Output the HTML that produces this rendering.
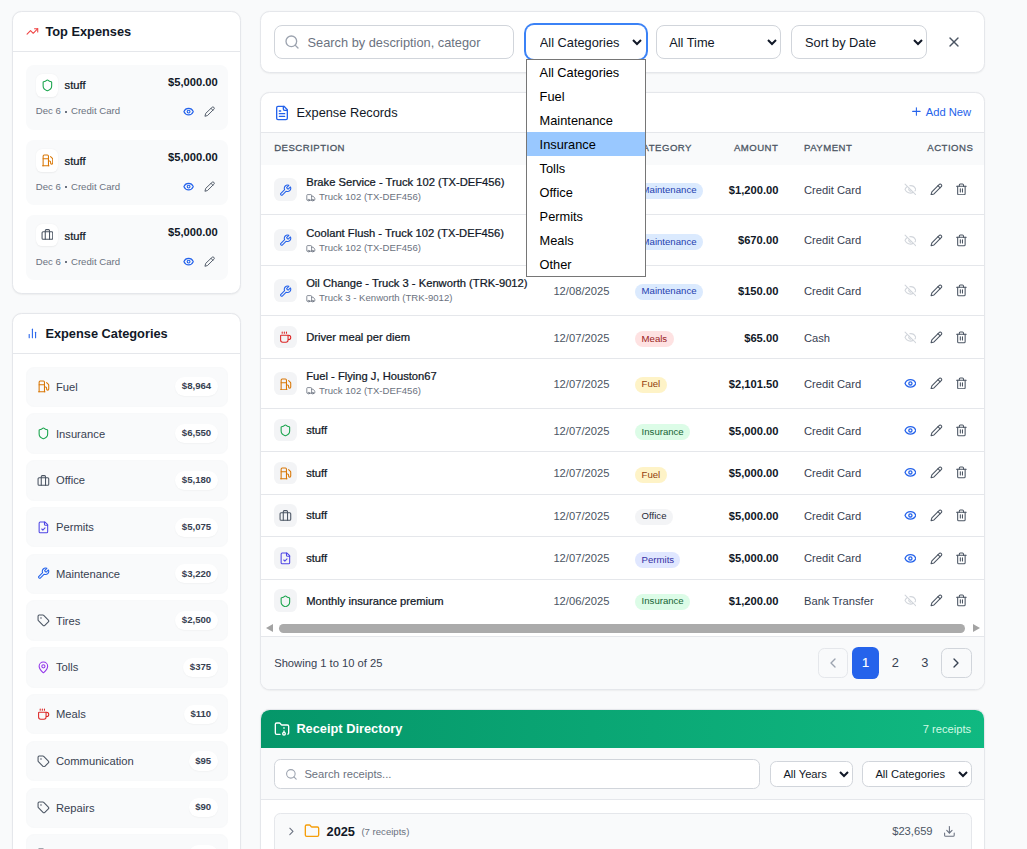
<!DOCTYPE html>
<html lang="en">
<head>
<meta charset="utf-8">
<title>Expenses</title>
<style>
*{box-sizing:border-box;margin:0;padding:0}
html,body{width:1027px;height:849px;overflow:hidden;background:#f9fafb}
body{font-family:"Liberation Sans",sans-serif;color:#111827;position:relative}
#z{zoom:.8;position:absolute;left:0;top:0;width:1283.75px;height:1061.25px;overflow:hidden;font-size:16px;line-height:24px}
svg.i{fill:none;stroke:currentColor;stroke-width:2;stroke-linecap:round;stroke-linejoin:round;display:block;flex:none}
.w3{width:12px;height:12px}.w35{width:14px;height:14px}.w4{width:16px;height:16px}.w5{width:20px;height:20px}
.med{-webkit-text-stroke:.3px currentColor}
.card{position:absolute;background:#fff;border:1px solid #e5e7eb;border-radius:12px;box-shadow:0 1px 2px rgba(0,0,0,.05);overflow:hidden}
.chead{display:flex;align-items:center;gap:8px;padding:12px 16px;border-bottom:1px solid #e5e7eb;height:49.5px;font-weight:700;font-size:16px;line-height:24px;color:#111827}
/* left column */
#left1{left:15.5px;top:14px;width:286px;height:353.6px}
#left2{left:15.5px;top:391.5px;width:286px;height:760px}
.tbody{padding:16px;display:flex;flex-direction:column;gap:12px}
.te{background:#f9fafb;border-radius:10px;padding:12px;height:82px;margin-right:-1px}
.te:nth-child(3){height:81px}
.te:nth-child(3) .r1,.te:nth-child(3) .r2{position:relative;top:-1.1px}
.te:nth-child(3) .nm,.te:nth-child(3) .meta{position:relative;top:1.1px}
.te .r1{display:flex;align-items:flex-start;justify-content:space-between}
.te .l{display:flex;align-items:center;gap:8px}
.ib{width:28px;height:28px;border-radius:8px;background:#fff;display:flex;align-items:center;justify-content:center;box-shadow:0 1px 2px rgba(0,0,0,.06)}
.te .nm{font-size:14px;line-height:20px;color:#111827}
.te .amt{font-size:14px;line-height:20px;font-weight:700;color:#111827;margin-right:1px}
.te .r2{display:flex;align-items:center;justify-content:space-between;margin-top:8px;height:22px}
.te .meta{font-size:12px;line-height:16px;color:#6b7280}
.bl{display:inline-block;width:2.5px;height:2.5px;background:currentColor;margin:0 5.1px;vertical-align:middle;position:relative;top:0px}
.te .acts{display:flex;gap:4px}
.te .acts span{width:22px;height:22px;display:flex;align-items:center;justify-content:center}
.cbody{padding:16px;display:flex;flex-direction:column;gap:8px}
.ci{margin-right:-1px;background:#f9fafb;border:1px solid #f8f9fa;border-radius:10px;padding:0 12px;height:50.5px;display:flex;align-items:center;justify-content:space-between;flex:none}
.ci .l{display:flex;align-items:center;gap:8px;font-size:14px;line-height:20px;color:#374151}
.ci .p{background:#fff;border-radius:999px;padding:4px 8px;font-size:12px;line-height:16px;font-weight:700;color:#374151;box-shadow:0 1px 2px rgba(0,0,0,.04)}
.blue{color:#2563eb}.red{color:#dc2626}.amber{color:#d97706}.green{color:#16a34a}.gray{color:#4b5563}.indigo{color:#4f46e5}.purple{color:#9333ea}.lgray{color:#d1d5db}

/* main */
#fbar{left:325.5px;top:14px;width:905.75px;height:77px;overflow:visible}
.srch{position:absolute;border:1px solid #d1d5db;border-radius:10px;background:#fff}
.ph{position:absolute;color:#6b7280;white-space:nowrap}
select.sel{position:absolute;font-family:"Liberation Sans",sans-serif;font-size:16px;color:#111827;background-color:#fff;border:1px solid #d1d5db;border-radius:10px;padding:1px 12px 0;outline:none}
select.sel.focus{border-color:transparent;box-shadow:0 0 0 2.5px #3b82f6}
select.sel.sm{font-size:14px;border-radius:8px;padding:0 8px 0 11.5px}
#tcard{left:325.5px;top:115.5px;width:905.75px;height:746.5px}
.addnew{margin-left:auto;display:flex;align-items:center;gap:4px;position:relative;top:-1px;font-size:14px;line-height:20px;color:#2563eb;font-weight:400}
.twrap{width:100%;overflow:hidden}
table{border-collapse:collapse;table-layout:fixed;width:905.9px}
th{background:#f9fafb;text-align:left;padding:11px 16px 13px;font-size:12px;line-height:16px;font-weight:400;-webkit-text-stroke:.35px currentColor;letter-spacing:.05em;text-transform:uppercase;color:#4b5563;height:39.8px}
th.r,td.r{text-align:right}
td{padding:0 16px;border-top:1px solid #e5e7eb;font-size:14px;line-height:20px;vertical-align:middle;white-space:nowrap}
tr.two td{height:62.75px}tr.one td{height:53.4px}
tbody tr:first-child td{border-top:none}
tbody tr:nth-child(1) td{height:61.7px}
tbody tr:nth-child(2) td{height:63.8px}
tbody tr:nth-child(3) td{height:62.75px}
tbody tr:nth-child(4) td{height:53.4px}
tbody tr:nth-child(5) td{height:62.75px}
tbody tr:nth-child(6) td{height:53.4px}
tbody tr:nth-child(7) td{height:53.9px}
tbody tr:nth-child(8) td{height:52.6px}
tbody tr:nth-child(9) td{height:53.7px}
tbody tr:nth-child(10) td{height:52.2px}
td+td{padding-top:1.4px}
td.dt,td.am,td.py{padding-top:3.6px}
.two td.dt,.two td.am,.two td.py{padding-top:1.2px}
.two .bdg{top:.1px}
tbody tr:nth-child(2) .d>div:last-child{top:.3px}
tbody tr:nth-child(1) .sub{margin-top:2.2px}
tbody tr:nth-child(n+7) td.dt,tbody tr:nth-child(n+7) td.am,tbody tr:nth-child(n+7) td.py{padding-top:2.4px}
tbody tr:nth-child(8) .bdg,tbody tr:nth-child(10) .bdg{top:0}
tbody tr:nth-child(10) .tt{position:relative;top:.8px}
tbody tr:nth-child(7) td.dt,tbody tr:nth-child(7) td.am,tbody tr:nth-child(7) td.py,tbody tr:nth-child(9) td.dt,tbody tr:nth-child(9) td.am,tbody tr:nth-child(9) td.py{padding-top:1px}


.d{display:flex;align-items:center;gap:12px}.two .d>div:last-child{position:relative;top:-.7px}
.tib{width:28px;height:28px;border-radius:8px;background:#f3f4f6;display:flex;align-items:center;justify-content:center;flex:none}
.tt{font-size:14px;line-height:20px;color:#111827}
.tib svg{position:relative;top:.7px}
.sub{display:flex;align-items:center;gap:4px;font-size:12px;line-height:16px;color:#6b7280;margin-top:1.2px}
.dt{color:#4b5563}.py{color:#374151}.am{font-weight:700;color:#111827}
.bdg{display:inline-block;padding:2px 8px;border-radius:999px;font-size:12px;line-height:16px;position:relative;top:1.2px}
.b-blue{background:#dbeafe;color:#1e40af}.b-red{background:#fee2e2;color:#991b1b}.b-amber{background:#fef3c7;color:#92400e}.b-green{background:#dcfce7;color:#166534}.b-gray{background:#f3f4f6;color:#1f2937}.b-indigo{background:#e0e7ff;color:#3730a3}
.ac{display:flex;justify-content:flex-end;gap:4px}
.ac span{width:28px;height:28px;display:flex;align-items:center;justify-content:center}

.ac span:first-child{margin-right:1.25px}
.ac span:last-child{margin-right:1.25px;margin-left:-1.25px}
tbody tr:nth-child(7) .ac,tbody tr:nth-child(1) .ac,tbody tr:nth-child(3) .ac,tbody tr:nth-child(5) .ac{position:relative;top:-1.1px}
tbody tr:nth-child(2) .bdg{top:1.35px}
tbody tr:nth-child(10) .ac{position:relative;top:-.7px}
svg.blue use[href="#eye"]{stroke-width:2.4}
.hscroll{height:19px;background:#fff;position:relative}
.tfoot{border-top:1px solid #e5e7eb;background:#f9fafb;height:66px;display:flex;align-items:center;justify-content:space-between;padding:0 16px}
.show{font-size:14px;line-height:20px;color:#374151}
.pg{display:flex;align-items:center;gap:3.5px;margin-right:-.4px}
.pb{width:38px;height:38px;border:1px solid #d1d5db;border-radius:8px;display:flex;align-items:center;justify-content:center;color:#374151;background:transparent}
.pb.dis{margin-right:1.1px;color:#9ca3af;border-color:#e5e7eb;background:#f9fafb}
.pn{width:33.6px;height:40px;padding-bottom:2.4px;border-radius:8px;display:flex;align-items:center;justify-content:center;font-size:16px;color:#374151}
.pn.act{background:#2563eb;color:#fff;-webkit-text-stroke:.3px #fff}
#rcard{left:325.5px;top:886px;width:905.75px;height:300px}
.rhead{height:49px;margin:-1px -1px 0;background:linear-gradient(90deg,#059669,#10b981);display:flex;align-items:center;gap:8px;padding:0 16px;color:#fff}
.rhead .t{font-weight:700;font-size:16px}
.rhead .cnt{margin-left:auto;font-size:14px;color:#d1fae5;position:relative;left:-1px;top:1px}
.rfilt{position:relative;height:65px;background:#f9fafb;border-bottom:1px solid #e5e7eb}
.frow{margin:16px 15px 0 16px;height:54px;padding-bottom:8.5px !important;border:1px solid #e5e7eb;border-radius:8px;background:#f9fafb;display:flex;align-items:center;padding:0 12px;gap:6px}
.yr{font-weight:700;font-size:16px;color:#111827;margin-left:2px}
.rc{font-size:12px;color:#6b7280;margin-left:2px}
.tot{margin-left:auto;font-size:14px;color:#4b5563}

#pop{position:absolute;left:526px;top:59px;width:120px;height:218px;border:1px solid #767676;background:#fff;font-size:12.8px;line-height:25px;color:#000}
#pop div{height:24px;padding-left:12.6px;white-space:nowrap}
#pop .hl{background:#99c8ff}
#hs i{position:absolute;display:block}
#hs .th{left:279px;top:624px;width:685.5px;height:9px;border-radius:4.5px;background:#ababab}
#hs .la{left:265.5px;top:624px;width:0;height:0;border-top:4.5px solid transparent;border-bottom:4.5px solid transparent;border-right:7px solid #a3a3a3}
#hs .ra{left:972.5px;top:624px;width:0;height:0;border-top:4.5px solid transparent;border-bottom:4.5px solid transparent;border-left:7px solid #a3a3a3}
</style>
</head>
<body>
<svg width="0" height="0" style="position:absolute">
<defs>
<g id="trend"><polyline points="22 7 13.5 15.5 8.5 10.5 2 17"/><polyline points="16 7 22 7 22 13"/></g>
<g id="shield"><path d="M20 13c0 5-3.5 7.5-7.66 8.95a1 1 0 0 1-.67-.01C7.5 20.5 4 18 4 13V6a1 1 0 0 1 1-1c2 0 4.5-1.2 6.24-2.72a1.17 1.17 0 0 1 1.52 0C14.51 3.81 17 5 19 5a1 1 0 0 1 1 1z"/></g>
<g id="fuel"><line x1="3" x2="15" y1="22" y2="22"/><line x1="4" x2="14" y1="9" y2="9"/><path d="M14 22V4a2 2 0 0 0-2-2H6a2 2 0 0 0-2 2v18"/><path d="M14 13h2a2 2 0 0 1 2 2v2a2 2 0 0 0 2 2a2 2 0 0 0 2-2V9.83a2 2 0 0 0-.59-1.42L18 5"/></g>
<g id="brief"><rect width="20" height="14" x="2" y="7" rx="2" ry="2"/><path d="M16 21V5a2 2 0 0 0-2-2h-4a2 2 0 0 0-2 2v16"/></g>
<g id="eye"><path d="M2.062 12.348a1 1 0 0 1 0-.696 10.75 10.75 0 0 1 19.876 0 1 1 0 0 1 0 .696 10.75 10.75 0 0 1-19.876 0"/><circle cx="12" cy="12" r="3"/></g>
<g id="pencil"><path d="M17 3a2.85 2.83 0 1 1 4 4L7.5 20.5 2 22l1.5-5.5Z"/><path d="m15 5 4 4"/></g>
<g id="bars"><line x1="18" x2="18" y1="20" y2="10"/><line x1="12" x2="12" y1="20" y2="4"/><line x1="6" x2="6" y1="20" y2="14"/></g>
<g id="fcheck"><path d="M15 2H6a2 2 0 0 0-2 2v16a2 2 0 0 0 2 2h12a2 2 0 0 0 2-2V7Z"/><path d="M14 2v4a2 2 0 0 0 2 2h4"/><path d="m9 15 2 2 4-4"/></g>
<g id="wrench"><path d="M14.7 6.3a1 1 0 0 0 0 1.4l1.6 1.6a1 1 0 0 0 1.4 0l3.77-3.77a6 6 0 0 1-7.94 7.94l-6.91 6.91a2.12 2.12 0 0 1-3-3l6.91-6.91a6 6 0 0 1 7.94-7.94l-3.76 3.76z"/></g>
<g id="tag"><path d="M12.586 2.586A2 2 0 0 0 11.172 2H4a2 2 0 0 0-2 2v7.172a2 2 0 0 0 .586 1.414l8.704 8.704a2.426 2.426 0 0 0 3.42 0l6.58-6.58a2.426 2.426 0 0 0 0-3.42z"/><circle cx="7.5" cy="7.5" r=".5" fill="currentColor"/></g>
<g id="pin"><path d="M20 10c0 4.993-5.539 10.193-7.399 11.799a1 1 0 0 1-1.202 0C9.539 20.193 4 14.993 4 10a8 8 0 0 1 16 0"/><circle cx="12" cy="10" r="3"/></g>
<g id="coffee"><path d="M10 2v2"/><path d="M14 2v2"/><path d="M16 8a1 1 0 0 1 1 1v8a4 4 0 0 1-4 4H7a4 4 0 0 1-4-4V9a1 1 0 0 1 1-1h14a4 4 0 1 1 0 8h-1"/><path d="M6 2v2"/></g>
<g id="search"><circle cx="11" cy="11" r="8"/><path d="m21 21-4.3-4.3"/></g>
<g id="x"><path d="M18 6 6 18"/><path d="m6 6 12 12"/></g>
<g id="ftext"><path d="M15 2H6a2 2 0 0 0-2 2v16a2 2 0 0 0 2 2h12a2 2 0 0 0 2-2V7Z"/><path d="M14 2v4a2 2 0 0 0 2 2h4"/><path d="M10 9H8"/><path d="M16 13H8"/><path d="M16 17H8"/></g>
<g id="plus"><path d="M5 12h14"/><path d="M12 5v14"/></g>
<g id="eyeoff"><path d="M10.733 5.076a10.744 10.744 0 0 1 11.205 6.575 1 1 0 0 1 0 .696 10.747 10.747 0 0 1-1.444 2.49"/><path d="M14.084 14.158a3 3 0 0 1-4.242-4.242"/><path d="M17.479 17.499a10.75 10.75 0 0 1-15.417-5.151 1 1 0 0 1 0-.696 10.75 10.75 0 0 1 4.446-5.143"/><path d="m2 2 20 20"/></g>
<g id="trash"><path d="M3 6h18"/><path d="M19 6v14c0 1-1 2-2 2H7c-1 0-2-1-2-2V6"/><path d="M8 6V4c0-1 1-2 2-2h4c1 0 2 1 2 2v2"/><line x1="10" x2="10" y1="11" y2="17"/><line x1="14" x2="14" y1="11" y2="17"/></g>
<g id="truck"><path d="M14 18V6a2 2 0 0 0-2-2H4a2 2 0 0 0-2 2v11a1 1 0 0 0 1 1h2"/><path d="M15 18H9"/><path d="M19 18h2a1 1 0 0 0 1-1v-3.65a1 1 0 0 0-.22-.624l-3.48-4.35A1 1 0 0 0 17.52 8H14"/><circle cx="17" cy="18" r="2"/><circle cx="7" cy="18" r="2"/></g>
<g id="cleft"><path d="m15 18-6-6 6-6"/></g>
<g id="cright"><path d="m9 18 6-6-6-6"/></g>
<g id="farch"><circle cx="15" cy="19" r="2"/><path d="M20.9 19.8A2 2 0 0 0 22 18V8a2 2 0 0 0-2-2h-7.9a2 2 0 0 1-1.69-.9L9.6 3.9A2 2 0 0 0 7.93 3H4a2 2 0 0 0-2 2v13a2 2 0 0 0 2 2h5.1"/><path d="M15 11v-1"/><path d="M15 17v-2"/></g>
<g id="folder"><path d="M20 20a2 2 0 0 0 2-2V8a2 2 0 0 0-2-2h-7.9a2 2 0 0 1-1.69-.9L9.6 3.9A2 2 0 0 0 7.93 3H4a2 2 0 0 0-2 2v13a2 2 0 0 0 2 2Z"/></g>
<g id="dl"><path d="M21 15v4a2 2 0 0 1-2 2H5a2 2 0 0 1-2-2v-4"/><polyline points="7 10 12 15 17 10"/><line x1="12" x2="12" y1="15" y2="3"/></g>
</defs>
</svg>

<div id="z">

<!-- LEFT: Top Expenses -->
<div class="card" id="left1">
  <div class="chead"><svg class="i w4" style="color:#ef4444" viewBox="0 0 24 24"><use href="#trend"/></svg><span>Top Expenses</span></div>
  <div class="tbody">
    <div class="te">
      <div class="r1"><div class="l"><div class="ib"><svg class="i w4 green" viewBox="0 0 24 24"><use href="#shield"/></svg></div><span class="nm med">stuff</span></div><span class="amt">$5,000.00</span></div>
      <div class="r2"><span class="meta">Dec 6<i class="bl"></i>Credit Card</span><div class="acts"><span><svg class="i w35 blue" viewBox="0 0 24 24"><use href="#eye"/></svg></span><span><svg class="i w35 gray" viewBox="0 0 24 24"><use href="#pencil"/></svg></span></div></div>
    </div>
    <div class="te">
      <div class="r1"><div class="l"><div class="ib"><svg class="i w4 amber" viewBox="0 0 24 24"><use href="#fuel"/></svg></div><span class="nm med">stuff</span></div><span class="amt">$5,000.00</span></div>
      <div class="r2"><span class="meta">Dec 6<i class="bl"></i>Credit Card</span><div class="acts"><span><svg class="i w35 blue" viewBox="0 0 24 24"><use href="#eye"/></svg></span><span><svg class="i w35 gray" viewBox="0 0 24 24"><use href="#pencil"/></svg></span></div></div>
    </div>
    <div class="te">
      <div class="r1"><div class="l"><div class="ib"><svg class="i w4 gray" viewBox="0 0 24 24"><use href="#brief"/></svg></div><span class="nm med">stuff</span></div><span class="amt">$5,000.00</span></div>
      <div class="r2"><span class="meta">Dec 6<i class="bl"></i>Credit Card</span><div class="acts"><span><svg class="i w35 blue" viewBox="0 0 24 24"><use href="#eye"/></svg></span><span><svg class="i w35 gray" viewBox="0 0 24 24"><use href="#pencil"/></svg></span></div></div>
    </div>
  </div>
</div>

<!-- LEFT: Expense Categories -->
<div class="card" id="left2">
  <div class="chead"><svg class="i w4 blue" viewBox="0 0 24 24"><use href="#bars"/></svg><span>Expense Categories</span></div>
  <div class="cbody">
    <div class="ci"><div class="l"><svg class="i w4 amber" viewBox="0 0 24 24"><use href="#fuel"/></svg><span>Fuel</span></div><span class="p">$8,964</span></div>
    <div class="ci"><div class="l"><svg class="i w4 green" viewBox="0 0 24 24"><use href="#shield"/></svg><span>Insurance</span></div><span class="p">$6,550</span></div>
    <div class="ci"><div class="l"><svg class="i w4 gray" viewBox="0 0 24 24"><use href="#brief"/></svg><span>Office</span></div><span class="p">$5,180</span></div>
    <div class="ci"><div class="l"><svg class="i w4 indigo" viewBox="0 0 24 24"><use href="#fcheck"/></svg><span>Permits</span></div><span class="p">$5,075</span></div>
    <div class="ci"><div class="l"><svg class="i w4 blue" viewBox="0 0 24 24"><use href="#wrench"/></svg><span>Maintenance</span></div><span class="p">$3,220</span></div>
    <div class="ci"><div class="l"><svg class="i w4 gray" viewBox="0 0 24 24"><use href="#tag"/></svg><span>Tires</span></div><span class="p">$2,500</span></div>
    <div class="ci"><div class="l"><svg class="i w4 purple" viewBox="0 0 24 24"><use href="#pin"/></svg><span>Tolls</span></div><span class="p">$375</span></div>
    <div class="ci"><div class="l"><svg class="i w4 red" viewBox="0 0 24 24"><use href="#coffee"/></svg><span>Meals</span></div><span class="p">$110</span></div>
    <div class="ci"><div class="l"><svg class="i w4 gray" viewBox="0 0 24 24"><use href="#tag"/></svg><span>Communication</span></div><span class="p">$95</span></div>
    <div class="ci"><div class="l"><svg class="i w4 gray" viewBox="0 0 24 24"><use href="#tag"/></svg><span>Repairs</span></div><span class="p">$90</span></div>
    <div class="ci"><div class="l"><svg class="i w4 gray" viewBox="0 0 24 24"><use href="#tag"/></svg><span>Other</span></div><span class="p">$75</span></div>
  </div>
</div>

<!-- FILTER BAR -->
<div class="card" id="fbar">
  <div class="srch" style="left:15.25px;top:16px;width:300.25px;height:42.5px">
    <svg class="i w5" viewBox="0 0 24 24" style="position:absolute;left:12.25px;top:10.5px;color:#9ca3af"><use href="#search"/></svg>
    <span class="ph" style="left:41.25px;top:8.6px;font-size:16px;line-height:24px">Search by description, categor</span>
  </div>
  <select class="sel focus" style="left:331px;top:16px;width:150px;height:42.5px"><option>All Categories</option></select>
  <select class="sel" style="left:492.75px;top:16px;width:157.25px;height:42.5px"><option>All Time</option></select>
  <select class="sel" style="left:662.5px;top:16px;width:170px;height:42.5px"><option>Sort by Date</option></select>
  <svg class="i w5" viewBox="0 0 24 24" style="position:absolute;left:855.5px;top:26.7px;color:#4b5563"><use href="#x"/></svg>
</div>

<!-- TABLE CARD -->
<div class="card" id="tcard">
  <div class="chead" style="font-weight:400"><svg class="i w5 blue" viewBox="0 0 24 24"><use href="#ftext"/></svg><span>Expense Records</span>
    <span class="addnew"><svg class="i w4" viewBox="0 0 24 24"><use href="#plus"/></svg>Add New</span></div>
  <div class="twrap">
  <table>
    <colgroup><col style="width:349px"><col style="width:102.25px"><col style="width:117px"><col style="width:94px"><col style="width:114.6px"><col style="width:129.05px"></colgroup>
    <thead><tr><th>Description</th><th>Date</th><th>Category</th><th class="r">Amount</th><th>Payment</th><th class="r">Actions</th></tr></thead>
    <tbody>
<tr class="two"><td><div class="d"><div class="tib"><svg class="i w4 blue" viewBox="0 0 24 24"><use href="#wrench"/></svg></div><div><div class="tt med">Brake Service - Truck 102 (TX-DEF456)</div><div class="sub"><svg class="i w3" viewBox="0 0 24 24"><use href="#truck"/></svg><span>Truck 102 (TX-DEF456)</span></div></div></div></td><td class="dt">12/08/2025</td><td><span class="bdg b-blue">Maintenance</span></td><td class="r am">$1,200.00</td><td class="py">Credit Card</td><td><div class="ac"><span><svg class="i w4 lgray" viewBox="0 0 24 24"><use href="#eyeoff"/></svg></span><span><svg class="i w4 gray" viewBox="0 0 24 24"><use href="#pencil"/></svg></span><span><svg class="i w4 gray" viewBox="0 0 24 24"><use href="#trash"/></svg></span></div></td></tr>
<tr class="two"><td><div class="d"><div class="tib"><svg class="i w4 blue" viewBox="0 0 24 24"><use href="#wrench"/></svg></div><div><div class="tt med">Coolant Flush - Truck 102 (TX-DEF456)</div><div class="sub"><svg class="i w3" viewBox="0 0 24 24"><use href="#truck"/></svg><span>Truck 102 (TX-DEF456)</span></div></div></div></td><td class="dt">12/08/2025</td><td><span class="bdg b-blue">Maintenance</span></td><td class="r am">$670.00</td><td class="py">Credit Card</td><td><div class="ac"><span><svg class="i w4 lgray" viewBox="0 0 24 24"><use href="#eyeoff"/></svg></span><span><svg class="i w4 gray" viewBox="0 0 24 24"><use href="#pencil"/></svg></span><span><svg class="i w4 gray" viewBox="0 0 24 24"><use href="#trash"/></svg></span></div></td></tr>
<tr class="two"><td><div class="d"><div class="tib"><svg class="i w4 blue" viewBox="0 0 24 24"><use href="#wrench"/></svg></div><div><div class="tt med">Oil Change - Truck 3 - Kenworth (TRK-9012)</div><div class="sub"><svg class="i w3" viewBox="0 0 24 24"><use href="#truck"/></svg><span>Truck 3 - Kenworth (TRK-9012)</span></div></div></div></td><td class="dt">12/08/2025</td><td><span class="bdg b-blue">Maintenance</span></td><td class="r am">$150.00</td><td class="py">Credit Card</td><td><div class="ac"><span><svg class="i w4 lgray" viewBox="0 0 24 24"><use href="#eyeoff"/></svg></span><span><svg class="i w4 gray" viewBox="0 0 24 24"><use href="#pencil"/></svg></span><span><svg class="i w4 gray" viewBox="0 0 24 24"><use href="#trash"/></svg></span></div></td></tr>
<tr class="one"><td><div class="d"><div class="tib"><svg class="i w4 red" viewBox="0 0 24 24"><use href="#coffee"/></svg></div><div><div class="tt med">Driver meal per diem</div></div></div></td><td class="dt">12/07/2025</td><td><span class="bdg b-red">Meals</span></td><td class="r am">$65.00</td><td class="py">Cash</td><td><div class="ac"><span><svg class="i w4 lgray" viewBox="0 0 24 24"><use href="#eyeoff"/></svg></span><span><svg class="i w4 gray" viewBox="0 0 24 24"><use href="#pencil"/></svg></span><span><svg class="i w4 gray" viewBox="0 0 24 24"><use href="#trash"/></svg></span></div></td></tr>
<tr class="two"><td><div class="d"><div class="tib"><svg class="i w4 amber" viewBox="0 0 24 24"><use href="#fuel"/></svg></div><div><div class="tt med">Fuel - Flying J, Houston67</div><div class="sub"><svg class="i w3" viewBox="0 0 24 24"><use href="#truck"/></svg><span>Truck 102 (TX-DEF456)</span></div></div></div></td><td class="dt">12/07/2025</td><td><span class="bdg b-amber">Fuel</span></td><td class="r am">$2,101.50</td><td class="py">Credit Card</td><td><div class="ac"><span><svg class="i w4 blue" viewBox="0 0 24 24"><use href="#eye"/></svg></span><span><svg class="i w4 gray" viewBox="0 0 24 24"><use href="#pencil"/></svg></span><span><svg class="i w4 gray" viewBox="0 0 24 24"><use href="#trash"/></svg></span></div></td></tr>
<tr class="one"><td><div class="d"><div class="tib"><svg class="i w4 green" viewBox="0 0 24 24"><use href="#shield"/></svg></div><div><div class="tt med">stuff</div></div></div></td><td class="dt">12/07/2025</td><td><span class="bdg b-green">Insurance</span></td><td class="r am">$5,000.00</td><td class="py">Credit Card</td><td><div class="ac"><span><svg class="i w4 blue" viewBox="0 0 24 24"><use href="#eye"/></svg></span><span><svg class="i w4 gray" viewBox="0 0 24 24"><use href="#pencil"/></svg></span><span><svg class="i w4 gray" viewBox="0 0 24 24"><use href="#trash"/></svg></span></div></td></tr>
<tr class="one"><td><div class="d"><div class="tib"><svg class="i w4 amber" viewBox="0 0 24 24"><use href="#fuel"/></svg></div><div><div class="tt med">stuff</div></div></div></td><td class="dt">12/07/2025</td><td><span class="bdg b-amber">Fuel</span></td><td class="r am">$5,000.00</td><td class="py">Credit Card</td><td><div class="ac"><span><svg class="i w4 blue" viewBox="0 0 24 24"><use href="#eye"/></svg></span><span><svg class="i w4 gray" viewBox="0 0 24 24"><use href="#pencil"/></svg></span><span><svg class="i w4 gray" viewBox="0 0 24 24"><use href="#trash"/></svg></span></div></td></tr>
<tr class="one"><td><div class="d"><div class="tib"><svg class="i w4 gray" viewBox="0 0 24 24"><use href="#brief"/></svg></div><div><div class="tt med">stuff</div></div></div></td><td class="dt">12/07/2025</td><td><span class="bdg b-gray">Office</span></td><td class="r am">$5,000.00</td><td class="py">Credit Card</td><td><div class="ac"><span><svg class="i w4 blue" viewBox="0 0 24 24"><use href="#eye"/></svg></span><span><svg class="i w4 gray" viewBox="0 0 24 24"><use href="#pencil"/></svg></span><span><svg class="i w4 gray" viewBox="0 0 24 24"><use href="#trash"/></svg></span></div></td></tr>
<tr class="one"><td><div class="d"><div class="tib"><svg class="i w4 indigo" viewBox="0 0 24 24"><use href="#fcheck"/></svg></div><div><div class="tt med">stuff</div></div></div></td><td class="dt">12/07/2025</td><td><span class="bdg b-indigo">Permits</span></td><td class="r am">$5,000.00</td><td class="py">Credit Card</td><td><div class="ac"><span><svg class="i w4 blue" viewBox="0 0 24 24"><use href="#eye"/></svg></span><span><svg class="i w4 gray" viewBox="0 0 24 24"><use href="#pencil"/></svg></span><span><svg class="i w4 gray" viewBox="0 0 24 24"><use href="#trash"/></svg></span></div></td></tr>
<tr class="one"><td><div class="d"><div class="tib"><svg class="i w4 green" viewBox="0 0 24 24"><use href="#shield"/></svg></div><div><div class="tt med">Monthly insurance premium</div></div></div></td><td class="dt">12/06/2025</td><td><span class="bdg b-green">Insurance</span></td><td class="r am">$1,200.00</td><td class="py">Bank Transfer</td><td><div class="ac"><span><svg class="i w4 lgray" viewBox="0 0 24 24"><use href="#eyeoff"/></svg></span><span><svg class="i w4 gray" viewBox="0 0 24 24"><use href="#pencil"/></svg></span><span><svg class="i w4 gray" viewBox="0 0 24 24"><use href="#trash"/></svg></span></div></td></tr>
    </tbody>
  </table>
  </div>
  <div class="hscroll"><i class="la"></i><i class="th"></i><i class="ra"></i></div>
  <div class="tfoot"><span class="show">Showing 1 to 10 of 25</span>
    <div class="pg"><span class="pb dis"><svg class="i w5" viewBox="0 0 24 24"><use href="#cleft"/></svg></span><span class="pn act">1</span><span class="pn">2</span><span class="pn">3</span><span class="pb"><svg class="i w5" viewBox="0 0 24 24"><use href="#cright"/></svg></span></div>
  </div>
</div>

<!-- RECEIPT DIRECTORY -->
<div class="card" id="rcard">
  <div class="rhead"><svg class="i w5" viewBox="0 0 24 24" style="margin-left:0.75px"><use href="#farch"/></svg><span class="t">Receipt Directory</span><span class="cnt">7 receipts</span></div>
  <div class="rfilt">
    <div class="srch" style="left:16px;top:14px;width:607px;height:37px;border-radius:8px">
      <svg class="i" viewBox="0 0 24 24" style="position:absolute;left:12px;top:9.5px;width:16px;height:16px;color:#9ca3af"><use href="#search"/></svg>
      <span class="ph" style="left:36.5px;top:7px;font-size:14px;line-height:20px">Search receipts...</span>
    </div>
    <select class="sel sm" style="left:636px;top:16.5px;width:104px;height:32px"><option>All Years</option></select>
    <select class="sel sm" style="left:751px;top:16.5px;width:137.5px;height:32px"><option>All Categories</option></select>
  </div>
  <div class="frow">
    <svg class="i w4" viewBox="0 0 24 24" style="color:#6b7280"><use href="#cright"/></svg>
    <svg class="i w5" viewBox="0 0 24 24" style="color:#f59e0b;margin-left:2.2px"><use href="#folder"/></svg>
    <span class="yr">2025</span><span class="rc">(7 receipts)</span>
    <span class="tot">$23,659</span>
    <svg class="i w4" viewBox="0 0 24 24" style="color:#6b7280;margin-left:7px;margin-right:7px"><use href="#dl"/></svg>
  </div>
</div>


</div>
<div id="hs"><i class="la"></i><i class="th"></i><i class="ra"></i></div>
<div id="pop"><div>All Categories</div><div>Fuel</div><div>Maintenance</div><div class="hl">Insurance</div><div>Tolls</div><div>Office</div><div>Permits</div><div>Meals</div><div>Other</div></div>
</body>
</html>
